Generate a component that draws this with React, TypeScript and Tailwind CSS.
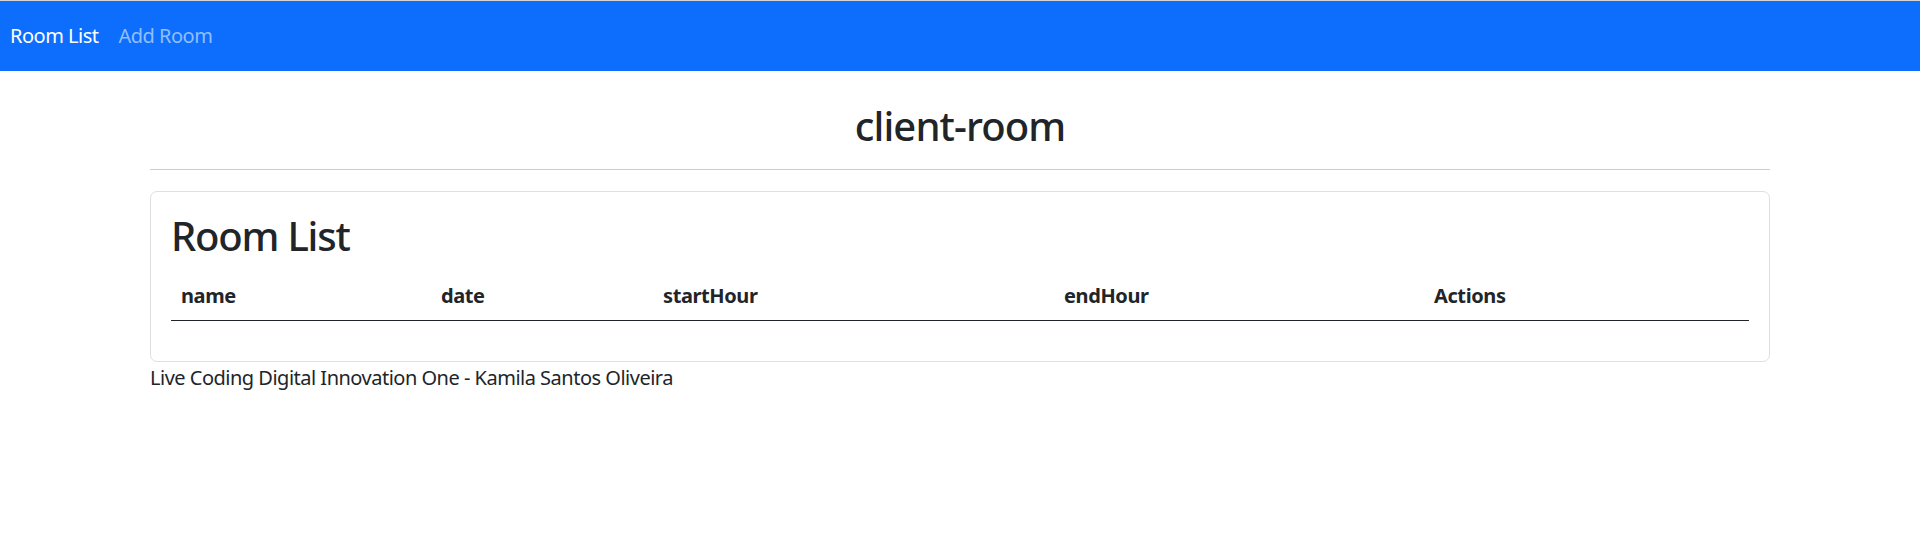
import React from "react";

export default function App() {
  const cols = [
    { label: "name", w: "w-[260px]" },
    { label: "date", w: "w-[222px]" },
    { label: "startHour", w: "w-[401px]" },
    { label: "endHour", w: "w-[370px]" },
    { label: "Actions", w: "" },
  ];
  return (
    <div className="min-h-[543px] bg-white text-[#212529] font-['Noto_Sans','Open_Sans',sans-serif]">
      <div className="h-px bg-[#d4d4d4]" />
      <nav className="flex bg-[#0d6efd] py-[10px]">
        <a className="px-[10px] py-[10px] text-[20px] leading-[30px] tracking-[-0.5px] text-white">Room List</a>
        <a className="px-[10px] py-[10px] text-[20px] leading-[30px] tracking-[-0.5px] text-[#92befe]">Add Room</a>
      </nav>
      <div className="mx-auto w-[1650px] px-[15px]">
        <div className="pt-[31px] pb-[19px]">
          <h2 className="text-center text-[40px] leading-[48px] font-medium tracking-[-0.9px]">client-room</h2>
        </div>
        <hr className="mb-[21px] border-t border-[#cdcdcd]" />
        <div className="rounded-[7px] border border-[#dfdfdf] p-[20px]">
          <h2 className="mb-[10px] text-[40px] leading-[48px] font-medium tracking-[-1.2px]">Room List</h2>
          <table className="mb-[20px] w-full table-fixed border-separate border-spacing-0">
            <thead>
              <tr>
                {cols.map((c) => (
                  <th
                    key={c.label}
                    className={`${c.w} border-b border-[#212529] px-[10px] pt-[11px] pb-[9px] text-left text-[20px] leading-[30px] font-bold tracking-[-0.4px]`}
                  >
                    {c.label}
                  </th>
                ))}
              </tr>
            </thead>
            <tbody></tbody>
          </table>
        </div>
        <p className="pt-px text-[20px] leading-[30px] tracking-[-0.5px]">Live Coding Digital Innovation One - Kamila Santos Oliveira</p>
      </div>
    </div>
  );
}
